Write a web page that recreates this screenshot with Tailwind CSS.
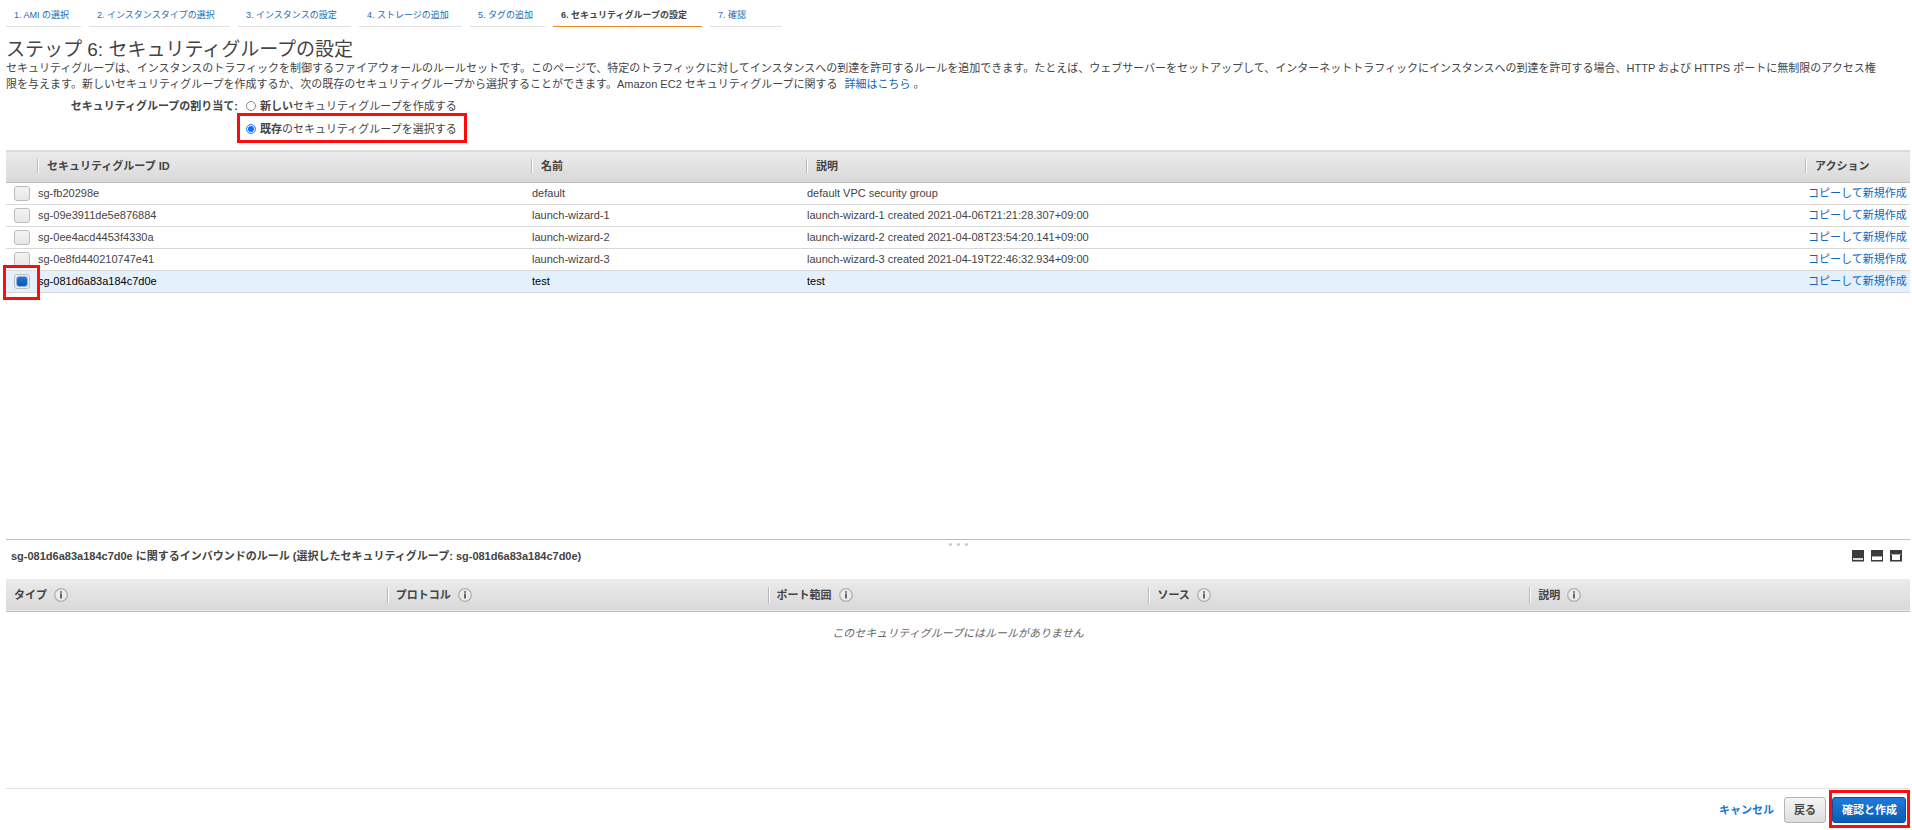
<!DOCTYPE html>
<html lang="ja">
<head>
<meta charset="utf-8">
<title>ステップ 6: セキュリティグループの設定</title>
<script src="https://cdn.jsdelivr.net/npm/@tailwindcss/browser@4"></script>
</head>
<body class="bg-white text-[#444] text-[11px] leading-4 font-['Liberation_Sans','Noto_Sans_CJK_JP',sans-serif]">
<div class="min-h-screen flex flex-col">

  <header class="pl-1.5 pr-2">
    <nav class="flex gap-2 text-[9px] leading-[14px] text-[#146eb4]">
      <a href="#" class="min-w-[75px] px-2 pt-2 pb-1 border-b border-[#e2e2e2] whitespace-nowrap">1. AMI の選択</a>
      <a href="#" class="min-w-[141px] px-2 pt-2 pb-1 border-b border-[#e2e2e2] whitespace-nowrap">2. インスタンスタイプの選択</a>
      <a href="#" class="min-w-[113px] px-2 pt-2 pb-1 border-b border-[#e2e2e2] whitespace-nowrap">3. インスタンスの設定</a>
      <a href="#" class="min-w-[103px] px-2 pt-2 pb-1 border-b border-[#e2e2e2] whitespace-nowrap">4. ストレージの追加</a>
      <a href="#" class="min-w-[75px] px-2 pt-2 pb-1 border-b border-[#e2e2e2] whitespace-nowrap">5. タグの追加</a>
      <a href="#" aria-current="step" class="min-w-[149px] px-2 pt-2 pb-1 border-b border-[#f08a1c] text-[#444] font-bold whitespace-nowrap">6. セキュリティグループの設定</a>
      <a href="#" class="min-w-[72px] px-2 pt-2 pb-1 border-b border-[#e2e2e2] whitespace-nowrap">7. 確認</a>
    </nav>
    <h1 class="mt-[13px] text-[19px] leading-5">ステップ 6: セキュリティグループの設定</h1>
    <p>セキュリティグループは、インスタンスのトラフィックを制御するファイアウォールのルールセットです。このページで、特定のトラフィックに対してインスタンスへの到達を許可するルールを追加できます。たとえば、ウェブサーバーをセットアップして、インターネットトラフィックにインスタンスへの到達を許可する場合、HTTP および HTTPS ポートに無制限のアクセス権<br><span>限を与えます。新しいセキュリティグループを作成するか、次の既存のセキュリティグループから選択することができます。Amazon EC2 セキュリティグループに関する</span> <a href="#" class="ml-1 text-[#1166bb]">詳細はこちら</a> <span>。</span></p>
    <div role="radiogroup" aria-labelledby="assign" class="mt-1.5 flex gap-2">
      <div id="assign" class="w-[232px] text-right font-bold">セキュリティグループの割り当て:</div>
      <div class="flex flex-col gap-[7px]">
        <label class="flex items-center gap-1"><input type="radio" name="sg" class="appearance-none size-2.5 rounded-full border border-[#8a8a8a] bg-white"><span><b>新しい</b>セキュリティグループを作成する</span></label>
        <label class="relative flex items-center gap-1"><input type="radio" name="sg" checked class="appearance-none size-2.5 rounded-full border border-[#3d8bff] bg-[#0a6fff] shadow-[inset_0_0_0_1px_white]"><span><b>既存</b>のセキュリティグループを選択する</span><span class="absolute -left-[9px] -right-2.5 -top-2 -bottom-1.5 border-3 border-[#fb0d0d] pointer-events-none"></span></label>
      </div>
    </div>
  </header>

  <section class="mt-[13px] pl-1.5 pr-0.5 flex-1">
    <table class="w-full table-fixed border-collapse text-left">
      <colgroup><col class="w-8"><col class="w-[494px]"><col class="w-[275px]"><col><col class="w-[104px]"></colgroup>
      <thead class="bg-linear-to-b from-[#ebebeb] to-[#d9d9d9] border-t border-t-[#dedede] border-b border-b-[#bdbdbd]">
        <tr class="h-8">
          <th class="p-0"></th>
          <th class="p-0 pb-0.5"><div class="flex h-3.5 items-center border-l border-[#b9b9b9] shadow-[inset_1px_0_0_white] pl-[9px] -ml-px">セキュリティグループ ID</div></th>
          <th class="p-0 pb-0.5"><div class="flex h-3.5 items-center border-l border-[#b9b9b9] shadow-[inset_1px_0_0_white] pl-[9px] -ml-px">名前</div></th>
          <th class="p-0 pb-0.5"><div class="flex h-3.5 items-center border-l border-[#b9b9b9] shadow-[inset_1px_0_0_white] pl-[9px] -ml-px">説明</div></th>
          <th class="p-0 pb-0.5"><div class="flex h-3.5 items-center border-l border-[#b9b9b9] shadow-[inset_1px_0_0_white] pl-[9px] -ml-px">アクション</div></th>
        </tr>
      </thead>
      <tbody>
        <tr class="h-[22px] border-b border-[#d8d8d8]">
          <td class="pl-2"><input type="checkbox" aria-label="sg-fb20298e" class="block appearance-none w-4 h-[15px] rounded-[3px] border border-[#bcbcbc] bg-linear-to-b from-[#f4f4f4] to-[#e6e6e6]"></td>
          <td class="pb-0.5">sg-fb20298e</td><td class="pb-0.5">default</td><td class="pb-0.5">default VPC security group</td>
          <td class="pl-0.5 pb-0.5 whitespace-nowrap"><a href="#" class="text-[#1166bb]">コピーして新規作成</a></td>
        </tr>
        <tr class="h-[22px] border-b border-[#d8d8d8]">
          <td class="pl-2"><input type="checkbox" aria-label="sg-09e3911de5e876884" class="block appearance-none w-4 h-[15px] rounded-[3px] border border-[#bcbcbc] bg-linear-to-b from-[#f4f4f4] to-[#e6e6e6]"></td>
          <td class="pb-0.5">sg-09e3911de5e876884</td><td class="pb-0.5">launch-wizard-1</td><td class="pb-0.5">launch-wizard-1 created 2021-04-06T21:21:28.307+09:00</td>
          <td class="pl-0.5 pb-0.5 whitespace-nowrap"><a href="#" class="text-[#1166bb]">コピーして新規作成</a></td>
        </tr>
        <tr class="h-[22px] border-b border-[#d8d8d8]">
          <td class="pl-2"><input type="checkbox" aria-label="sg-0ee4acd4453f4330a" class="block appearance-none w-4 h-[15px] rounded-[3px] border border-[#bcbcbc] bg-linear-to-b from-[#f4f4f4] to-[#e6e6e6]"></td>
          <td class="pb-0.5">sg-0ee4acd4453f4330a</td><td class="pb-0.5">launch-wizard-2</td><td class="pb-0.5">launch-wizard-2 created 2021-04-08T23:54:20.141+09:00</td>
          <td class="pl-0.5 pb-0.5 whitespace-nowrap"><a href="#" class="text-[#1166bb]">コピーして新規作成</a></td>
        </tr>
        <tr class="h-[22px] border-b border-[#d8d8d8]">
          <td class="pl-2"><input type="checkbox" aria-label="sg-0e8fd440210747e41" class="block appearance-none w-4 h-[15px] rounded-[3px] border border-[#bcbcbc] bg-linear-to-b from-[#f4f4f4] to-[#e6e6e6]"></td>
          <td class="pb-0.5">sg-0e8fd440210747e41</td><td class="pb-0.5">launch-wizard-3</td><td class="pb-0.5">launch-wizard-3 created 2021-04-19T22:46:32.934+09:00</td>
          <td class="pl-0.5 pb-0.5 whitespace-nowrap"><a href="#" class="text-[#1166bb]">コピーして新規作成</a></td>
        </tr>
        <tr class="h-[22px] border-b border-[#d8d8d8] bg-[#e4f0fc] text-black">
          <td class="pl-2"><div class="relative w-4"><span class="block p-0.5 w-4 h-[15px] rounded-[3px] border border-[#bcbcbc] bg-[#eeeeee]"><input type="checkbox" checked aria-label="sg-081d6a83a184c7d0e" class="block appearance-none w-2.5 h-[9px] rounded-xs bg-linear-to-b from-[#1a78d6] to-[#0b5cb3] outline outline-[#0b5cb3]/40"></span><span class="absolute -left-[11px] -top-[9px] w-[37px] h-[35px] border-3 border-[#fb0d0d] pointer-events-none"></span></div></td>
          <td class="pb-0.5">sg-081d6a83a184c7d0e</td><td class="pb-0.5">test</td><td class="pb-0.5">test</td>
          <td class="pl-0.5 pb-0.5 whitespace-nowrap"><a href="#" class="text-[#1166bb]">コピーして新規作成</a></td>
        </tr>
      </tbody>
    </table>
  </section>

  <section class="ml-1.5 mr-0.5 min-h-[249px] border-t border-[#bfbfbf]">
    <div class="flex h-[9px] justify-center items-center gap-[5px]" role="separator">
      <i class="w-[3px] h-[3px] rounded-full bg-[#c4c4c4]"></i><i class="w-[3px] h-[3px] rounded-full bg-[#c4c4c4]"></i><i class="w-[3px] h-[3px] rounded-full bg-[#c4c4c4]"></i>
    </div>
    <div class="flex items-start justify-between pl-[5px] pr-2 h-[30px]">
      <h2 class="font-bold leading-[14px]">sg-081d6a83a184c7d0e に関するインバウンドのルール (選択したセキュリティグループ: sg-081d6a83a184c7d0e)</h2>
      <div class="flex gap-[7px] pt-px">
        <button aria-label="小"><svg class="block" width="12" height="12" viewBox="0 0 12 12" shape-rendering="crispEdges"><path fill="#3c3c3c" d="M0 0h12v11H0z"/><path fill="#999" d="M0 11h12v1H0z"/><path fill="#ddd" d="M1 8h10v2H1z"/></svg></button>
        <button aria-label="中"><svg class="block" width="12" height="12" viewBox="0 0 12 12" shape-rendering="crispEdges"><path fill="#3c3c3c" d="M0 0h12v11H0z"/><path fill="#999" d="M0 11h12v1H0z"/><path fill="#aaa" d="M1 6h10v1H1z"/><path fill="#fff" d="M1 7h10v3H1z"/></svg></button>
        <button aria-label="大"><svg class="block" width="12" height="12" viewBox="0 0 12 12" shape-rendering="crispEdges"><path fill="#3c3c3c" d="M0 0h12v11H0z"/><path fill="#999" d="M0 11h12v1H0z"/><path fill="#aaa" d="M1 4h10v1H1z"/><path fill="#fff" d="M2 5h8v5H2z"/></svg></button>
      </div>
    </div>
    <svg class="hidden"><symbol id="info" viewBox="0 0 14 14"><circle cx="7" cy="7" r="6.3" fill="#ececec" stroke="#b0b0b0" stroke-width="1.3"/><path fill="#444" d="M6.2 3.2h1.6v1.5H6.2zM6.2 5.6h1.6v5H6.2z"/></symbol></svg>
    <table class="w-full table-fixed border-collapse text-left">
      <thead class="bg-linear-to-b from-[#ebebeb] to-[#d9d9d9] border-b border-[#bdbdbd]">
        <tr class="h-8">
          <th class="p-0"><div class="flex h-4 items-center gap-[7px] pl-2">タイプ<svg class="size-3.5"><use href="#info"/></svg></div></th>
          <th class="p-0"><div class="flex h-4 items-center gap-[7px] border-l border-[#b9b9b9] shadow-[inset_1px_0_0_white] pl-2">プロトコル<svg class="size-3.5"><use href="#info"/></svg></div></th>
          <th class="p-0"><div class="flex h-4 items-center gap-[7px] border-l border-[#b9b9b9] shadow-[inset_1px_0_0_white] pl-2">ポート範囲<svg class="size-3.5"><use href="#info"/></svg></div></th>
          <th class="p-0"><div class="flex h-4 items-center gap-[7px] border-l border-[#b9b9b9] shadow-[inset_1px_0_0_white] pl-2">ソース<svg class="size-3.5"><use href="#info"/></svg></div></th>
          <th class="p-0"><div class="flex h-4 items-center gap-[7px] border-l border-[#b9b9b9] shadow-[inset_1px_0_0_white] pl-2">説明<svg class="size-3.5"><use href="#info"/></svg></div></th>
        </tr>
      </thead>
      <tbody><tr><td colspan="5" class="pt-[13px] text-center italic text-[#666]">このセキュリティグループにはルールがありません</td></tr></tbody>
    </table>
  </section>

  <footer class="ml-1.5 mr-0.5 border-t border-[#e2e2e2] flex items-center justify-end pt-2 pb-[7px] pr-1 font-bold">
    <a href="#" class="mr-2.5 text-[#1a78d6]">キャンセル</a>
    <button class="mr-1.5 h-[26px] px-[9px] rounded-[3px] border border-[#b5b5b5] bg-linear-to-b from-[#f5f5f5] to-[#dedede]">戻る</button>
    <div class="relative"><button class="block h-[26px] pl-[9px] pr-2 rounded-[3px] border border-[#0a4f9e] bg-linear-to-b from-[#1f7bd9] to-[#0b5cb3] text-white">確認と作成</button><span class="absolute -left-[3px] -right-1 -top-[7px] -bottom-[5px] border-3 border-[#fb0d0d] pointer-events-none"></span></div>
  </footer>
</div>
</body>
</html>
